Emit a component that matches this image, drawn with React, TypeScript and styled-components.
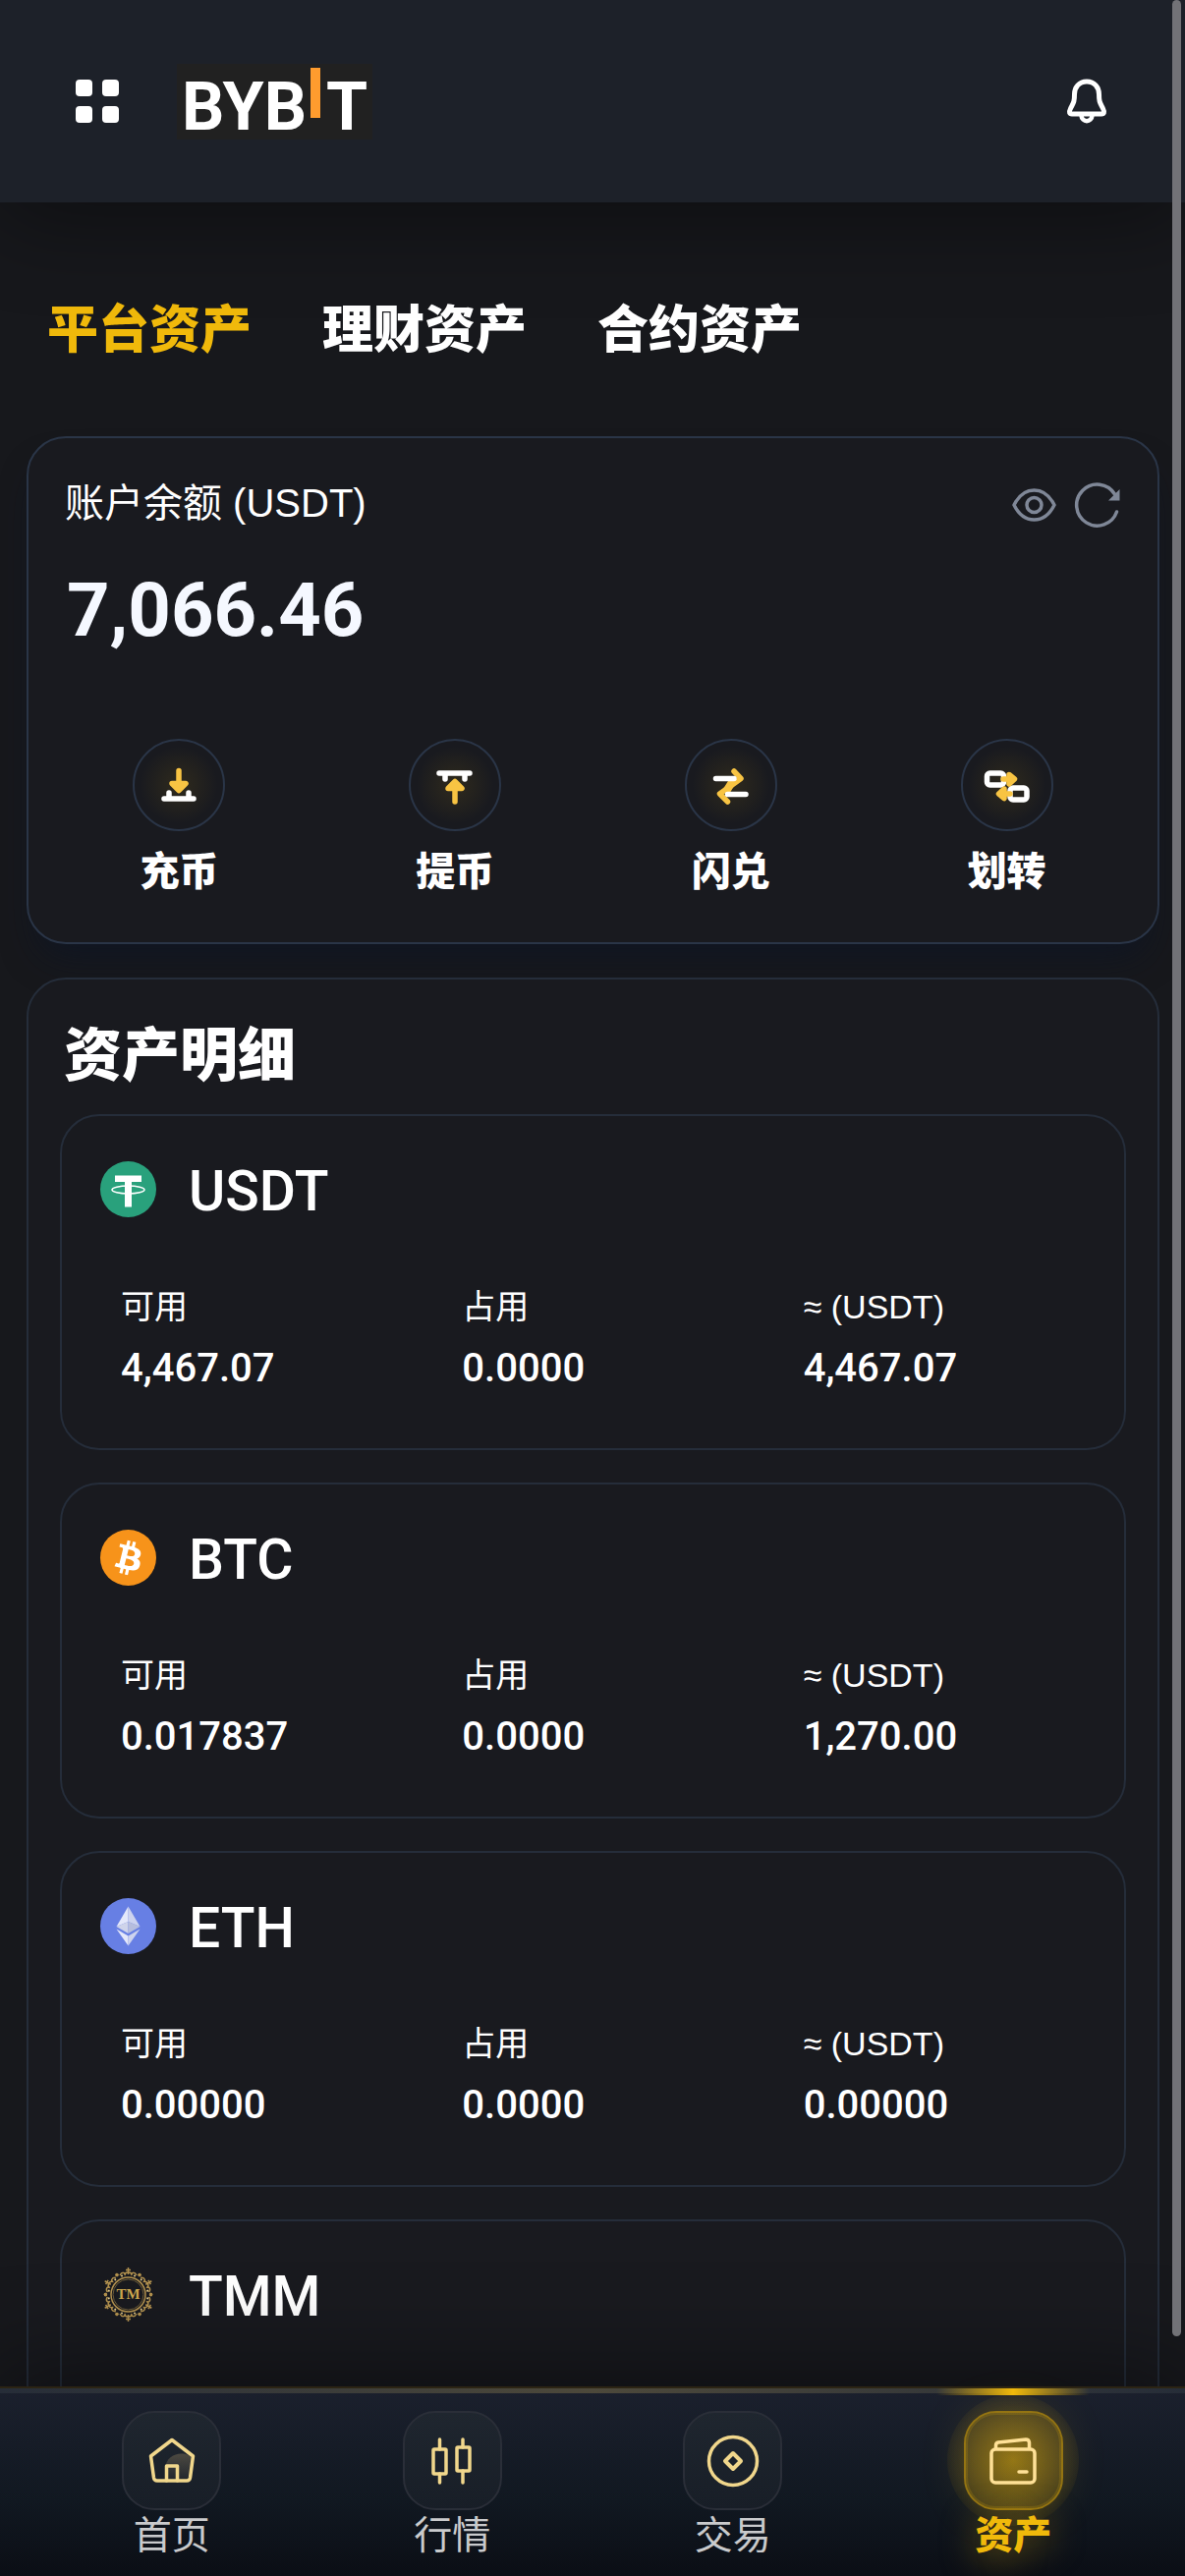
import React, { useState } from 'react';
import styled, { createGlobalStyle, css } from 'styled-components';

const GlobalStyle = createGlobalStyle`
	* {
		box-sizing: border-box;
	}
	body {
		margin: 0;
		background: #17181c;
		color: #fff;
		font-family: 'Liberation Sans', 'Noto Sans CJK SC', sans-serif;
	}
	button {
		padding: 0;
		border: 0;
		background: none;
		color: inherit;
		font-family: inherit;
		cursor: pointer;
	}
	svg {
		display: block;
		overflow: visible;
	}
`;

const Screen = styled.div`
	position: relative;
	display: flex;
	flex-direction: column;
	height: 100vh;
	overflow: hidden;
`;

const Header = styled.header`
	position: relative;
	z-index: 2;
	display: flex;
	flex: none;
	align-items: center;
	height: 206px;
	padding: 0 80px 0 77px;
	background: #1d2129;
	box-shadow: 0 12px 96px rgba(0, 0, 0, 0.45);
`;

const IconButton = styled.button`
	display: flex;
	flex: none;
`;

const Logo = styled.svg`
	margin: 0 auto 0 59px;
	background: #212121;
`;

const LogoText = styled.text`
	font-family: 'Liberation Sans Narrow', Roboto, sans-serif;
	font-size: 68px;
	font-weight: 700;
	fill: #fff;
`;

const Content = styled.main`
	flex: 1;
	min-height: 0;
	padding: 0 26px 0 27px;
	overflow-y: auto;
	scrollbar-width: none;
`;

const Tabs = styled.div`
	display: flex;
	gap: 72px;
	padding: 100px 21px 78px;
`;

const Tab = styled.button<{ $active: boolean }>`
	font-size: 52px;
	font-weight: 900;
	line-height: 60px;
	color: ${(p) => (p.$active ? '#f0b90b' : '#fff')};
`;

const BalanceCard = styled.section`
	padding: 38px 13px 47px;
	border: 2px solid #2a3547;
	border-radius: 40px;
	background: #191a1f;
	box-shadow: 0 24px 36px -12px rgba(10, 20, 40, 0.6);
`;

const BalanceHead = styled.div`
	display: flex;
	align-items: center;
	gap: 19px;
	height: 60px;
	padding: 0 25px 0 24px;
	color: #7f8797;
`;

const BalanceLabel = styled.h2`
	flex: 1;
	margin: 0;
	padding-bottom: 4px;
	font-size: 40px;
	font-weight: 400;
	line-height: 56px;
	color: #fff;
`;

const Balance = styled.p`
	margin: 32px 26px 86px;
	font-family: Roboto, sans-serif;
	font-size: 76px;
	font-weight: 700;
	line-height: 90px;
	color: #f5f8ff;
`;

const Actions = styled.div`
	display: grid;
	grid-template-columns: repeat(4, 1fr);
`;

const Action = styled.button`
	display: flex;
	flex-direction: column;
	align-items: center;
	gap: 16px;
	font-size: 40px;
	font-weight: 900;
	line-height: 50px;
`;

const ActionCircle = styled.span`
	display: flex;
	align-items: center;
	justify-content: center;
	width: 94px;
	height: 94px;
	border: 2px solid #2a3547;
	border-radius: 50%;
	background: radial-gradient(circle, rgba(240, 185, 11, 0.1), transparent 62%);
`;

const DetailCard = styled.section`
	position: relative;
	margin-top: 34px;
	padding: 43px 32px 33px;
	border: 2px solid #252d3a;
	border-radius: 40px;
	background: #191a1f;
`;

const DetailTitle = styled.h2`
	margin: 0 4px 24px;
	font-size: 59px;
	font-weight: 900;
	line-height: 70px;
`;

const CoinList = styled.div`
	display: grid;
	gap: 33px;
`;

const CoinCard = styled.article`
	min-height: 342px;
	padding: 34px 0 54px 39px;
	border: 2px solid #252d3a;
	border-radius: 40px;
`;

const CoinHead = styled.div`
	display: flex;
	align-items: center;
	gap: 33px;
	height: 80px;
`;

const CoinName = styled.h3`
	margin: 0;
	padding-top: 6px;
	font-family: Roboto, sans-serif;
	font-size: 57px;
	font-weight: 500;
	line-height: 74px;
`;

const Stats = styled.dl`
	display: grid;
	grid-template-columns: repeat(3, 1fr);
	margin: 58px 0 0;
`;

const Stat = styled.div`
	padding-left: 21px;
`;

const StatLabel = styled.dt`
	margin-bottom: 16px;
	font-size: 34px;
	line-height: 44px;
`;

const StatValue = styled.dd`
	margin: 0;
	font-family: Roboto, sans-serif;
	font-size: 40px;
	font-weight: 500;
	line-height: 50px;
`;

const TabBar = styled.nav`
	position: relative;
	z-index: 2;
	display: grid;
	flex: none;
	grid-template-columns: repeat(4, 1fr);
	padding: 23px 32px 21px;
	border-top: 2px solid #2c2413;
	background: linear-gradient(#1b202d, #111821 60%, #0b0e15);
	box-shadow: 0 -12px 96px rgba(0, 0, 0, 0.5);

	&::before {
		content: '';
		position: absolute;
		top: 0;
		left: 0;
		right: 0;
		height: 5px;
		background: linear-gradient(90deg, #262d38, #4d493b 50%, #262d38);
	}
`;

const TabItem = styled.a<{ $active?: boolean }>`
	position: relative;
	display: flex;
	flex-direction: column;
	align-items: center;
	gap: 6px;
	font-size: 39px;
	font-weight: ${(p) => (p.$active ? 900 : 400)};
	line-height: 40px;
	color: ${(p) => (p.$active ? '#f0b90b' : '#c9cacc')};
	text-decoration: none;
	text-shadow: ${(p) => (p.$active ? '0 6px 36px rgba(240, 185, 11, 0.5)' : 'none')};

	${(p) =>
		p.$active &&
		css`
			&::before {
				content: '';
				position: absolute;
				top: -23px;
				width: 156px;
				height: 7px;
				background: linear-gradient(90deg, transparent, #f0b90b 50%, transparent);
			}
			&::after {
				content: '';
				position: absolute;
				z-index: -1;
				top: -17px;
				width: 134px;
				height: 134px;
				border-radius: 50%;
				background: radial-gradient(circle closest-side, rgba(240, 185, 11, 0.4), rgba(240, 185, 11, 0.05));
			}
		`}
`;

const TabTile = styled.span<{ $active?: boolean }>`
	display: flex;
	align-items: center;
	justify-content: center;
	width: 101px;
	height: 101px;
	border: 2px solid ${(p) => (p.$active ? '#947412' : '#2a2e38')};
	border-radius: 33px;
	background: ${(p) =>
		p.$active
			? 'radial-gradient(circle, rgba(240, 185, 11, 0.3), rgba(240, 185, 11, 0.14))'
			: 'linear-gradient(#1f262f, #181e27)'};
	box-shadow: ${(p) =>
		p.$active ? '0 0 48px rgba(240, 185, 11, 0.14), inset 0 0 0 2px rgba(240, 185, 11, 0.16)' : 'none'};
	color: ${(p) => (p.$active ? '#ffe197' : '#f1d78c')};
`;

const ScrollThumb = styled.div`
	position: absolute;
	z-index: 3;
	top: 0;
	right: 4px;
	width: 9px;
	height: calc(100% - 244px);
	border-radius: 5px;
	background: #727277;
`;

const MenuIcon = () => (
	<svg width="44" height="44" fill="#fff">
		<rect x="0" y="0" width="17" height="17" rx="4" />
		<rect x="27" y="0" width="17" height="17" rx="4" />
		<rect x="0" y="27" width="17" height="17" rx="4" />
		<rect x="27" y="27" width="17" height="17" rx="4" />
	</svg>
);

const BellIcon = () => (
	<svg width="40" height="46" fill="none" stroke="#fff" strokeWidth="5" strokeLinejoin="round">
		<path d="M20 3C12 3 7.500 9 7.500 16C7.500 24 6.500 24.500 3.500 30.500C1.500 34.500 2.500 36 5 36H35C37.500 36 38.500 34.500 36.500 30.500C33.500 24.500 32.500 24 32.500 16C32.500 9 28 3 20 3Z" />
		<path d="M14.500 37.500C15 45 25 45 25.500 37.500" strokeWidth="4.500" />
	</svg>
);

const EyeIcon = () => (
	<svg width="45" height="34" fill="none" stroke="currentColor" strokeWidth="3.500" strokeLinejoin="round">
		<path d="M2 17C12 -3 33 -3 43 17C33 37 12 37 2 17Z" />
		<circle cx="22.500" cy="17" r="7.500" />
	</svg>
);

const RefreshIcon = () => (
	<svg width="46" height="46" fill="none" stroke="currentColor" strokeWidth="3.500" strokeLinecap="round">
		<path d="M42.500 30A21 21 0 1 1 40.500 12" />
		<path d="M45.500 7V18.500H34Z" fill="currentColor" stroke="none" />
	</svg>
);

const actionIcons = {
	deposit: (
		<>
			<path d="M9 38H39M14 38V32M34 38V32" stroke="#fff" />
			<path d="M24 9.500V29M17 22.500L24 29.500L31 22.500Z" />
		</>
	),
	withdraw: (
		<>
			<path d="M8 12H39M14 12V18M34 12V18" stroke="#fff" />
			<path d="M24 41V21M17 27.500L24 20.500L31 27.500Z" />
		</>
	),
	swap: (
		<>
			<path d="M27 10L34 17.500L12.500 33L20.500 41" fill="none" />
			<path d="M25 21L20 29" strokeWidth="8" />
			<path d="M8.500 17.500H27M20.500 33.500H39" stroke="#fff" />
		</>
	),
	transfer: (
		<>
			<rect x="3.500" y="12" width="17" height="12" rx="3" fill="none" stroke="#fff" />
			<rect x="27" y="27" width="17" height="12" rx="3" fill="none" stroke="#fff" />
			<path d="M20 18H26M26 13.500L31.500 18L26 23Z" />
			<path d="M27 33H21M21 28L15.500 33L21 37.500Z" />
		</>
	),
};

const coinIcons: Record<string, React.ReactNode> = {
	USDT: (
		<>
			<circle cx="28.500" cy="28.500" r="28.500" fill="#29a17c" />
			<path d="M15 14.500H42V21H32V46.500H25V21H15Z" fill="#fff" />
			<ellipse cx="28.500" cy="29" rx="16.500" ry="4" fill="none" stroke="#fff" strokeWidth="1.500" />
		</>
	),
	BTC: (
		<>
			<circle cx="28.500" cy="28.500" r="28.500" fill="#f7931a" />
			<path
				transform="scale(1.780)"
				fill="#fff"
				fillRule="evenodd"
				d="M23.189 14.02c.314-2.096-1.283-3.223-3.465-3.975l.708-2.84-1.728-.43-.69 2.765c-.454-.114-.92-.22-1.385-.326l.695-2.783L15.596 6l-.708 2.839c-.376-.086-.746-.17-1.104-.26l.002-.009-2.384-.595-.46 1.846s1.283.294 1.256.312c.7.175.826.638.805 1.006l-.806 3.235c.048.012.11.03.18.057l-.183-.045-1.13 4.532c-.086.212-.303.531-.793.41.018.025-1.256-.313-1.256-.313l-.858 1.978 2.25.561c.418.105.828.215 1.231.318l-.715 2.872 1.727.43.708-2.84c.472.127.93.245 1.378.357l-.706 2.828 1.728.43.715-2.866c2.948.558 5.164.333 6.097-2.333.752-2.146-.037-3.385-1.588-4.192 1.13-.26 1.98-1.003 2.207-2.538zm-3.95 5.538c-.533 2.147-4.148.986-5.32.695l.95-3.805c1.172.293 4.929.872 4.37 3.11zm.535-5.569c-.487 1.953-3.495.96-4.47.717l.86-3.45c.975.243 4.118.696 3.61 2.733z"
			/>
		</>
	),
	ETH: (
		<>
			<circle cx="28.500" cy="28.500" r="28.500" fill="#677fe4" />
			<path d="M28.500 8.500L16.500 29L28.500 24Z" fill="#e4e8fa" />
			<path d="M28.500 8.500L40.500 29L28.500 24Z" fill="#cdd3ee" />
			<path d="M16.500 29L28.500 24V36Z" fill="#cfd4ea" />
			<path d="M40.500 29L28.500 24V36Z" fill="#b6bddd" />
			<path d="M16.500 31.500L28.500 38.500V48.500Z" fill="#e4e8fa" />
			<path d="M40.500 31.500L28.500 38.500V48.500Z" fill="#cdd3ee" />
		</>
	),
	TMM: (
		<g fill="none" stroke="#b3924f">
			<circle cx="28.500" cy="28.500" r="17.500" strokeWidth="1.500" />
			<circle cx="28.500" cy="28.500" r="15.500" strokeWidth="1" stroke="#6d5d3a" />
			{[0, 60, 120, 180, 240, 300].map((angle) => (
				<g key={angle} transform={`rotate(${angle} 28.500 28.500)`}>
					<path d="M28.500 1V8M26 3.500H31M25 8C26 5 31 5 32 8" strokeWidth="1.500" />
					<path d="M20 9C22 5 26 6 25 9M37 9C35 5 31 6 32 9" strokeWidth="1.500" />
					<circle cx="17" cy="8.500" r="1.200" fill="#b3924f" />
					<circle cx="40" cy="8.500" r="1.200" fill="#b3924f" />
					<circle cx="22" cy="9.500" r="1" fill="#e8cf8f" stroke="none" />
					<circle cx="35" cy="9.500" r="1" fill="#e8cf8f" stroke="none" />
				</g>
			))}
			<text
				x="28.500"
				y="33"
				textAnchor="middle"
				fontFamily="Liberation Serif, serif"
				fontSize="15"
				fontWeight="700"
				fill="#cfa94f"
				stroke="none"
			>
				TM
			</text>
		</g>
	),
};

const navIcons = {
	home: (
		<>
			<defs>
				<linearGradient id="homeShade" x1="0" y1="0" x2="0" y2="1">
					<stop offset="0" stopColor="#4c4941" />
					<stop offset="1" stopColor="#4c4941" stopOpacity="0.15" />
				</linearGradient>
			</defs>
			<path d="M17 43V32C18 14 40 13 45 22L42 43Z" fill="url(#homeShade)" stroke="none" />
			<path d="M24 2.500L2.500 19L5.500 41Q6 44 9 44H39Q42 44 42.500 41L45.500 19Z" />
			<path d="M18.500 44V29H29.500V44" />
		</>
	),
	market: (
		<>
			<rect x="5" y="12" width="13" height="25" rx="1" />
			<path d="M11.500 2V12M11.500 37V46M35 2V10M35 34V46" />
			<rect x="29" y="10" width="13" height="24" rx="1" />
		</>
	),
	trade: (
		<>
			<circle cx="24" cy="24" r="24.500" />
			<path d="M24 16L32 24L24 32L16 24Z" strokeWidth="4" />
		</>
	),
	assets: (
		<>
			<rect x="2" y="12" width="44" height="34" rx="4" />
			<path d="M6.500 11V8Q6.500 5.500 9 5L37 2Q40 2 40.500 5V11" />
			<path d="M30 35H38" />
		</>
	),
};

const tabs = ['平台资产', '理财资产', '合约资产'];

const actions: { icon: keyof typeof actionIcons; label: string }[] = [
	{ icon: 'deposit', label: '充币' },
	{ icon: 'withdraw', label: '提币' },
	{ icon: 'swap', label: '闪兑' },
	{ icon: 'transfer', label: '划转' },
];

const coins: { name: string; amounts?: string[] }[] = [
	{ name: 'USDT', amounts: ['4,467.07', '0.0000', '4,467.07'] },
	{ name: 'BTC', amounts: ['0.017837', '0.0000', '1,270.00'] },
	{ name: 'ETH', amounts: ['0.00000', '0.0000', '0.00000'] },
	{ name: 'TMM' },
];

const statLabels = ['可用', '占用', '≈ (USDT)'];

const navItems: { icon: keyof typeof navIcons; label: string; active?: boolean }[] = [
	{ icon: 'home', label: '首页' },
	{ icon: 'market', label: '行情' },
	{ icon: 'trade', label: '交易' },
	{ icon: 'assets', label: '资产', active: true },
];

const App = () => {
	const [tab, setTab] = useState(tabs[0]);

	return (
		<Screen>
			<GlobalStyle />
			<Header>
				<IconButton aria-label="菜单">
					<MenuIcon />
				</IconButton>
				<Logo width="199" height="77" role="img" aria-label="BYBIT">
					<LogoText x="5" y="67">BYB</LogoText>
					<rect x="136" y="4" width="10" height="51" fill="#ff9c2e" />
					<LogoText x="152" y="67">T</LogoText>
				</Logo>
				<IconButton aria-label="通知">
					<BellIcon />
				</IconButton>
			</Header>

			<Content>
				<Tabs>
					{tabs.map((name) => (
						<Tab key={name} $active={name === tab} onClick={() => setTab(name)}>
							{name}
						</Tab>
					))}
				</Tabs>

				<BalanceCard>
					<BalanceHead>
						<BalanceLabel>账户余额 (USDT)</BalanceLabel>
						<IconButton aria-label="隐藏余额">
							<EyeIcon />
						</IconButton>
						<IconButton aria-label="刷新">
							<RefreshIcon />
						</IconButton>
					</BalanceHead>
					<Balance>7,066.46</Balance>
					<Actions>
						{actions.map(({ icon, label }) => (
							<Action key={icon}>
								<ActionCircle>
									<svg
										width="48"
										height="48"
										fill="#f8c443"
										stroke="#f8c443"
										strokeWidth="5.500"
										strokeLinecap="round"
										strokeLinejoin="round"
									>
										{actionIcons[icon]}
									</svg>
								</ActionCircle>
								{label}
							</Action>
						))}
					</Actions>
				</BalanceCard>

				<DetailCard>
					<DetailTitle>资产明细</DetailTitle>
					<CoinList>
						{coins.map(({ name, amounts }) => (
							<CoinCard key={name}>
								<CoinHead>
									<svg width="57" height="57">{coinIcons[name]}</svg>
									<CoinName>{name}</CoinName>
								</CoinHead>
								{amounts && (
									<Stats>
										{amounts.map((amount, i) => (
											<Stat key={statLabels[i]}>
												<StatLabel>{statLabels[i]}</StatLabel>
												<StatValue>{amount}</StatValue>
											</Stat>
										))}
									</Stats>
								)}
							</CoinCard>
						))}
					</CoinList>
				</DetailCard>
			</Content>

			<TabBar>
				{navItems.map(({ icon, label, active }) => (
					<TabItem key={icon} href="#" $active={active}>
						<TabTile $active={active}>
							<svg
								width="48"
								height="48"
								fill="none"
								stroke="currentColor"
								strokeWidth="3.500"
								strokeLinecap="round"
								strokeLinejoin="round"
							>
								{navIcons[icon]}
							</svg>
						</TabTile>
						{label}
					</TabItem>
				))}
			</TabBar>
			<ScrollThumb />
		</Screen>
	);
};

export default App;
